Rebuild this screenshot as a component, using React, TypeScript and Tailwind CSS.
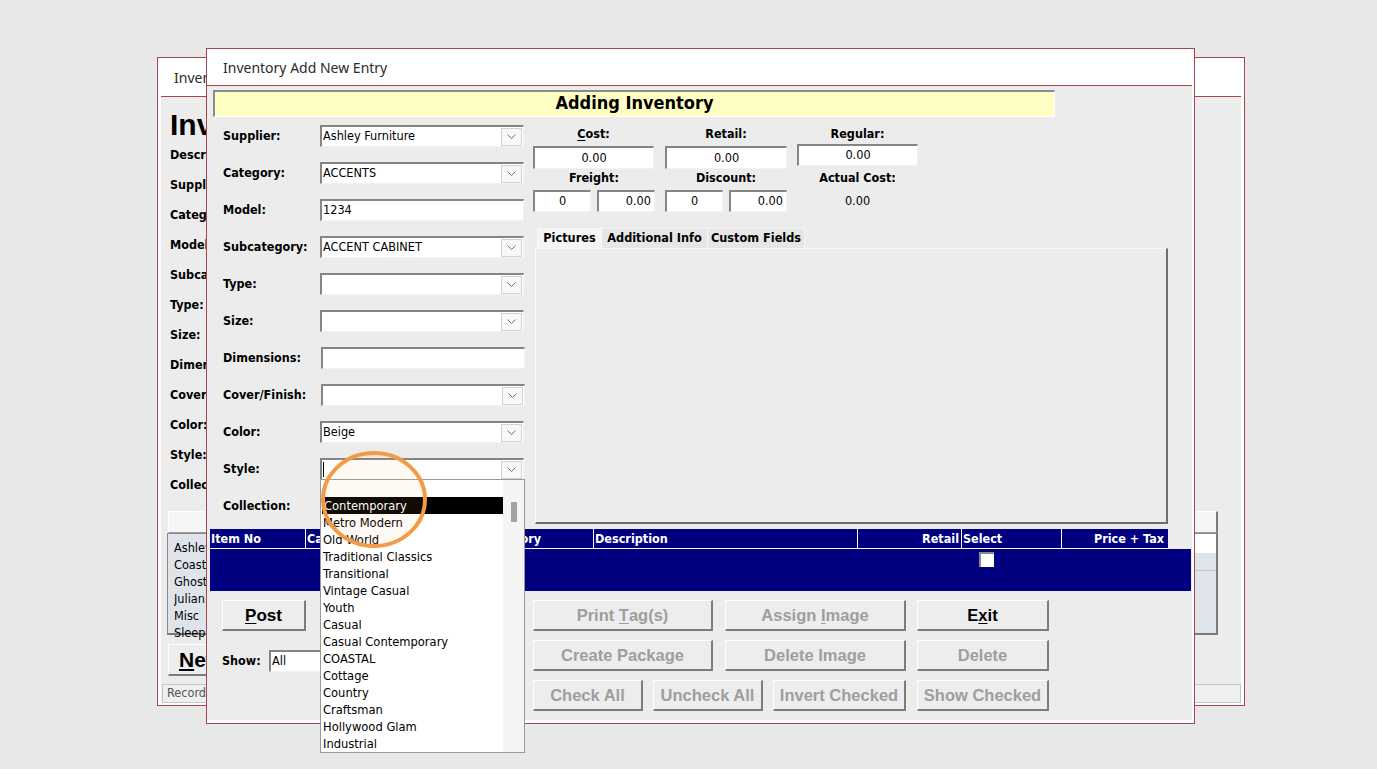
import React from "react";

const T = "font-['DejaVu_Sans_Condensed','Liberation_Sans',sans-serif]";
const A = "font-['Liberation_Sans','Arial',sans-serif]";
const SUNK =
  "bg-white border-t-2 border-l-2 border-r border-b border-t-[#858585] border-l-[#858585] border-r-[#f2f2f2] border-b-[#f2f2f2]";
const RAISED =
  "bg-[#ededed] border-t border-l border-t-white border-l-white border-r-2 border-b-2 border-r-[#7c7c7c] border-b-[#7c7c7c]";

function Chevron() {
  return (
    <svg width="9" height="5" viewBox="0 0 9 5" className="block">
      <path d="M0.5 0.5 L4.5 4.5 L8.5 0.5" fill="none" stroke="#707070" strokeWidth="1" />
    </svg>
  );
}

function Combo({ value = "", cursor = false, shift = false }: { value?: string; cursor?: boolean; shift?: boolean }) {
  return (
    <div className={`flex h-[22px] w-[204px] items-center ${SUNK} ${shift ? "ml-[1px]" : ""}`}>
      <div className={`flex flex-1 items-center overflow-hidden whitespace-nowrap pl-[1px] text-[12.6px] text-black ${T}`}>
        {cursor ? <span className="inline-block h-[15px] w-px bg-black" /> : value}
      </div>
      <div className="mr-[1px] flex h-[18px] w-[21px] items-center justify-center border border-[#d2d2d2] bg-[#f8f8f8]">
        <Chevron />
      </div>
    </div>
  );
}

function TextBox({ value = "", shift = false }: { value?: string; shift?: boolean }) {
  return (
    <div
      className={`flex h-[22px] w-[204px] items-center overflow-hidden whitespace-nowrap pl-[1px] text-[12.6px] text-black ${T} ${SUNK} ${shift ? "ml-[1px]" : ""}`}
    >
      {value}
    </div>
  );
}

const ITEMS = [
  "",
  "Contemporary",
  "Metro Modern",
  "Old World",
  "Traditional Classics",
  "Transitional",
  "Vintage Casual",
  "Youth",
  "Casual",
  "Casual Contemporary",
  "COASTAL",
  "Cottage",
  "Country",
  "Craftsman",
  "Hollywood Glam",
  "Industrial",
];

function DropList() {
  return (
    <div className={`absolute left-[320px] top-[479px] flex w-[205px] border border-[#9a9a9a] bg-white ${T}`}>
      <div className="w-[182px]">
        {ITEMS.map((it, i) => (
          <div
            key={i}
            className={`h-[17px] whitespace-nowrap pl-[2px] text-[12.8px] leading-[18px] ${
              it === "Contemporary" ? "ml-[1px] bg-black text-white" : "text-black"
            }`}
          >
            {it}
          </div>
        ))}
      </div>
      <div className="flex-1 bg-[#f4f4f4]">
        <div className="mx-auto mt-[22px] h-[20px] w-[6px] bg-[#a3a3a3]" />
      </div>
    </div>
  );
}

function Btn({
  children,
  w,
  disabled = true,
}: {
  children: React.ReactNode;
  w: string;
  disabled?: boolean;
}) {
  return (
    <div
      className={`flex h-[31px] items-center justify-center text-[16.5px] font-bold ${A} ${RAISED} ${w} ${
        disabled ? "text-[#9e9e9e]" : "text-black"
      }`}
    >
      {children}
    </div>
  );
}

function FrontWindow() {
  const rows: [string, React.ReactNode, string][] = [
    ["Supplier:", <Combo value="Ashley Furniture" />, "h-[37px]"],
    ["Category:", <Combo value="ACCENTS" />, "h-[37px]"],
    ["Model:", <TextBox value="1234" />, "h-[37px]"],
    ["Subcategory:", <Combo value="ACCENT CABINET" />, "h-[37px]"],
    ["Type:", <Combo />, "h-[37px]"],
    ["Size:", <Combo />, "h-[37px]"],
    ["Dimensions:", <TextBox shift />, "h-[37px]"],
    ["Cover/Finish:", <Combo shift />, "h-[37px]"],
    ["Color:", <Combo value="Beige" />, "h-[37px]"],
    ["Style:", <Combo cursor />, "h-[37px]"],
    ["Collection:", <Combo />, "h-[22px]"],
  ];
  const inputCls = `flex items-center text-[12.6px] text-black ${T} ${SUNK}`;
  return (
    <div className="absolute left-[206px] top-[48px] flex h-[676px] w-[989px] flex-col border border-[#a5474d] bg-white">
      <div className="flex h-[36px] items-center pl-[16px] font-['Noto_Sans',sans-serif] text-[14px] text-[#2a2a2a]">
        Inventory Add New Entry
      </div>
      <div className="mb-[3px] mr-[2px] flex flex-1 flex-col border-t border-[#a5474d] bg-[#ececec]">
        <div
          className={`ml-[6px] mt-[4px] flex h-[27px] w-[842px] items-center justify-center border-b border-l-2 border-r border-t-2 border-b-white border-l-[#8a8a8a] border-r-white border-t-[#8a8a8a] bg-[#ffffc4] pb-[3px] text-[18px] font-bold text-black ${T}`}
        >
          Adding Inventory
        </div>

        <div className="mt-[8px] flex">
          <div className="w-[318px] pl-[16px]">
            {rows.map(([label, ctl, h]) => (
              <div key={label} className={`flex items-start ${h}`}>
                <div className={`flex h-[22px] w-[97px] items-center text-[12.5px] font-bold text-black ${T}`}>{label}</div>
                {ctl}
              </div>
            ))}
          </div>

          <div className={`ml-[8px] flex flex-col ${T}`}>
            <div className="flex h-[19px] items-center text-[12.5px] font-bold text-black">
              <div className="w-[121px] text-center">
                <span className="underline underline-offset-2">C</span>ost:
              </div>
              <div className="ml-[11px] w-[122px] text-center">Retail:</div>
              <div className="ml-[10px] w-[121px] text-center">Regular:</div>
            </div>
            <div className="mt-[2px] flex items-start">
              <div className={`h-[23px] w-[121px] justify-center ${inputCls}`}>0.00</div>
              <div className={`ml-[11px] h-[23px] w-[122px] justify-center ${inputCls}`}>0.00</div>
              <div className={`-mt-[2px] ml-[10px] h-[22px] w-[121px] justify-center ${inputCls}`}>0.00</div>
            </div>
            <div className="flex h-[18px] items-center text-[12.5px] font-bold text-black">
              <div className="w-[122px] text-center">Freight:</div>
              <div className="ml-[10px] w-[122px] text-center">Discount:</div>
              <div className="ml-[10px] w-[121px] text-center">Actual Cost:</div>
            </div>
            <div className="mt-[3px] flex items-center">
              <div className={`h-[22px] w-[58px] justify-center ${inputCls}`}>0</div>
              <div className={`ml-[6px] h-[22px] w-[58px] justify-end pr-[3px] ${inputCls}`}>0.00</div>
              <div className={`ml-[10px] h-[22px] w-[58px] justify-center ${inputCls}`}>0</div>
              <div className={`ml-[6px] h-[22px] w-[58px] justify-end pr-[3px] ${inputCls}`}>0.00</div>
              <div className="ml-[10px] w-[121px] text-center text-[12.6px] text-black">0.00</div>
            </div>
            <div className="ml-[4px] mt-[16px] flex h-[20px] text-[12.6px] font-bold text-black">
              <div className="flex w-[65px] items-center justify-center border-l border-r border-t border-[#f9f9f9] bg-[#f4f4f4]">
                Pictures
              </div>
              <div className="flex w-[106px] items-center justify-center border-r border-t border-[#f4f4f4] bg-[#e6e6e6]">
                Additional Info
              </div>
              <div className="flex w-[97px] items-center justify-center border-r border-t border-[#f4f4f4] bg-[#e6e6e6]">
                Custom Fields
              </div>
            </div>
            <div className="ml-[2px] h-[276px] w-[633px] border-b-2 border-l border-r-2 border-t border-b-[#6e6e6e] border-l-[#f8f8f8] border-r-[#6e6e6e] border-t-[#f8f8f8] bg-[#ececec]" />
          </div>
        </div>

        <div className={`ml-[3px] mt-[5px] ${T}`}>
          <div className="flex h-[20px] w-[958px] border-b border-white bg-[#000080] text-[12.5px] font-bold leading-[19px] text-white">
            <div className="w-[96px] border-r border-white pl-[1px]">Item No</div>
            <div className="w-[154px] border-r border-white pl-[1px]">Category</div>
            <div className="w-[134px] border-r border-white pl-[1px]">Subcategory</div>
            <div className="w-[264px] border-r border-white pl-[1px]">Description</div>
            <div className="w-[104px] border-r border-white pr-[2px] text-right">Retail</div>
            <div className="w-[100px] border-r border-white pl-[1px]">Select</div>
            <div className="w-[106px] pr-[4px] text-right">Price + Tax</div>
          </div>
          <div className="flex h-[42px] w-[981px] bg-[#000080]">
            <div className="w-[769px]" />
            <div className="mt-[3px] h-[15px] w-[15px] border-l-2 border-t-2 border-l-[#8a8a8a] border-t-[#8a8a8a] bg-white" />
          </div>
        </div>

        <div className="mt-[9px] flex">
          <div className="flex w-[326px] flex-col pl-[15px]">
            <Btn w="w-[84px]" disabled={false}>
              <span className="mt-[1px] text-[17px]">
                <span className="underline underline-offset-2">P</span>ost
              </span>
            </Btn>
            <div className="mt-[19px] flex h-[22px] items-center">
              <div className={`w-[47px] text-[12.5px] font-bold text-black ${T}`}>Show:</div>
              <div className={`h-[22px] w-[160px] pl-[1px] ${inputCls}`}>All</div>
            </div>
          </div>
          <div className="flex flex-col gap-[9px]">
            <div className="flex">
              <Btn w="w-[180px]">
                Print&nbsp;<span className="underline underline-offset-2">T</span>ag(s)
              </Btn>
              <div className="ml-[12px]">
                <Btn w="w-[181px]">
                  Assign&nbsp;<span className="underline underline-offset-2">I</span>mage
                </Btn>
              </div>
              <div className="ml-[11px]">
                <Btn w="w-[132px]" disabled={false}>
                  E<span className="underline underline-offset-2">x</span>it
                </Btn>
              </div>
            </div>
            <div className="flex">
              <Btn w="w-[180px]">Create Package</Btn>
              <div className="ml-[12px]">
                <Btn w="w-[181px]">Delete Image</Btn>
              </div>
              <div className="ml-[11px]">
                <Btn w="w-[132px]">Delete</Btn>
              </div>
            </div>
            <div className="flex">
              <Btn w="w-[110px]">Check All</Btn>
              <div className="ml-[10px]">
                <Btn w="w-[110px]">Uncheck All</Btn>
              </div>
              <div className="ml-[10px]">
                <Btn w="w-[133px]">Invert Checked</Btn>
              </div>
              <div className="ml-[11px]">
                <Btn w="w-[132px]">Show Checked</Btn>
              </div>
            </div>
          </div>
        </div>
      </div>
    </div>
  );
}

function BackWindow() {
  const labels = [
    "Description:",
    "Supplier:",
    "Category:",
    "Model:",
    "Subcategory:",
    "Type:",
    "Size:",
    "Dimensions:",
    "Cover/Finish:",
    "Color:",
    "Style:",
    "Collection:",
  ];
  const vendors = ["Ashley Furniture", "Coaster", "Ghost Furniture", "Julian Bowen", "Misc", "Sleepwell"];
  return (
    <div className="absolute left-[157px] top-[57px] flex h-[649px] w-[1088px] flex-col border border-[#a5474d] bg-white">
      <div className="flex h-[38px] items-center pl-[16px] font-['Noto_Sans',sans-serif] text-[14px] text-[#2a2a2a]">
        Inventory
      </div>
      <div className="mx-[3px] mb-[2px] flex flex-1 flex-col border-t border-[#a5474d] bg-[#ececec]">
        <div className={`ml-[9px] mt-[13px] h-[30px] text-[30px] font-bold leading-[30px] text-black ${A}`}>Inventory</div>
        <div className={`ml-[9px] flex flex-col text-[12.5px] font-bold text-black ${T}`}>
          {labels.map((l) => (
            <div key={l} className="flex h-[30px] items-center">
              {l}
            </div>
          ))}
        </div>
        <div className="ml-[7px] mr-[23px] mt-[11px] h-[22px] border-b border-l border-r-2 border-t border-b-[#9a9a9a] border-l-white border-r-[#7a7a7a] border-t-white bg-[#f5f5f5]" />
        <div className="ml-[6px] mr-[23px] flex h-[102px] border-b-2 border-l border-r-2 border-t border-b-[#7a7a7a] border-l-[#8a8a8a] border-r-[#7a7a7a] border-t-[#8a8a8a] bg-[#dfe4eb]">
          <div className={`w-[200px] pl-[6px] pt-[5px] text-[12.6px] text-black ${T}`}>
            {vendors.map((v) => (
              <div key={v} className="h-[17px] overflow-hidden whitespace-nowrap leading-[17px]">
                {v}
              </div>
            ))}
          </div>
          <div className="flex flex-1 flex-col">
            <div className="h-[19px] bg-white" />
            <div className="h-[18px] border-b border-[#c3c9d1]" />
          </div>
        </div>
        <div className={`ml-[7px] mt-[9px] flex h-[32px] w-[110px] items-center pl-[10px] text-[21px] font-bold text-black ${A} ${RAISED}`}>
          <span className="underline underline-offset-2">N</span>ew
        </div>
        <div className={`ml-[1px] mt-auto flex h-[19px] items-center border border-[#c6c6c6] bg-[#efefef] pl-[4px] text-[12.6px] text-[#555] ${T}`}>
          Record: 1 of 6
        </div>
      </div>
    </div>
  );
}

export default function App() {
  return (
    <div className="relative h-[769px] w-[1377px] overflow-hidden bg-[#e8e8e8]">
      <BackWindow />
      <FrontWindow />
      <DropList />
      <svg className="absolute left-[318px] top-[448px]" width="112" height="104" viewBox="0 0 112 104">
        <ellipse cx="56" cy="51.5" rx="51" ry="46.5" fill="rgba(250,170,100,0.07)" stroke="#f39a45" strokeWidth="4" />
      </svg>
    </div>
  );
}
